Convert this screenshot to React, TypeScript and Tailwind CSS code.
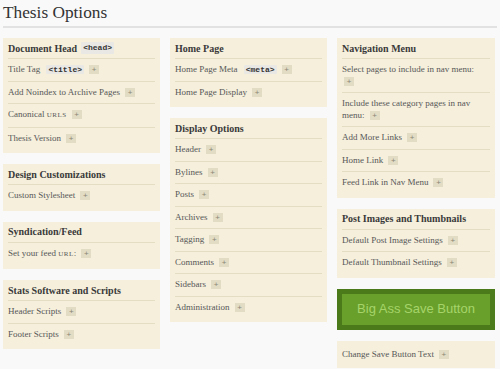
import type { ReactNode } from "react";

type Row = { label: ReactNode; wrap?: boolean };

function Code({ children }: { children: ReactNode }) {
  return (
    <span className="ml-[4px] rounded-[1px] bg-[#e9e8e4] px-[2px] font-[family-name:Liberation_Mono,monospace] text-[8px] font-bold text-[#333]">
      {children}
    </span>
  );
}

function Abbr({ children }: { children: ReactNode }) {
  return <span className="text-[7px] tracking-[0.5px]">{children}</span>;
}

function Plus({ tight }: { tight?: boolean }) {
  return (
    <span
      className={`${tight ? "ml-[2px]" : "ml-[5px]"} inline-block h-[9px] w-[10px] bg-[#e2dcc5] text-center align-middle font-[family-name:Liberation_Sans,sans-serif] text-[8px] leading-[9px] text-[#8a8572]`}
    >
      +
    </span>
  );
}

function Box({ title, rows, bare }: { title?: ReactNode; rows: Row[]; bare?: boolean }) {
  return (
    <div className={`bg-[#f5efdc] px-[5px] ${bare ? "py-[3px]" : "pb-[4px]"}`}>
      {title && (
        <div className="flex h-[21px] items-center border-b border-[#e4dcc3] text-[10px] font-bold text-[#3a3a3a]">
          {title}
        </div>
      )}
      {rows.map((r, i) => (
        <div
          key={i}
          className="border-b border-[#e4dcc3] py-[5px] text-[9px] leading-[11.5px] text-[#575757] last:border-b-0"
        >
          {r.label}
          {r.wrap && <br />}
          <Plus tight={r.wrap} />
        </div>
      ))}
    </div>
  );
}

export default function App() {
  return (
    <div className="min-h-[369px] w-[500px] bg-[#f9f9f9] font-[family-name:Liberation_Serif,serif]">
      <div className="px-[3px] pt-[1px]">
        <h1 className="h-[25px] text-[17.3px] leading-[24px] text-[#333]">Thesis Options</h1>
        <div className="h-[2px] bg-[#e2e2e2]" />
      </div>

      <div className="mt-[10px] grid grid-cols-[157px_157px_158px] gap-x-[10px] pl-[3px]">
        <div className="flex flex-col gap-[11px]">
          <Box
            title={
              <>
                Document Head <Code>&lt;head&gt;</Code>
              </>
            }
            rows={[
              {
                label: (
                  <>
                    Title Tag <Code>&lt;title&gt;</Code>
                  </>
                ),
              },
              { label: "Add Noindex to Archive Pages" },
              {
                label: (
                  <>
                    Canonical <Abbr>URLS</Abbr>
                  </>
                ),
              },
              { label: "Thesis Version" },
            ]}
          />
          <Box title="Design Customizations" rows={[{ label: "Custom Stylesheet" }]} />
          <Box
            title="Syndication/Feed"
            rows={[
              {
                label: (
                  <>
                    Set your feed <Abbr>URL</Abbr>:
                  </>
                ),
              },
            ]}
          />
          <Box
            title="Stats Software and Scripts"
            rows={[{ label: "Header Scripts" }, { label: "Footer Scripts" }]}
          />
        </div>

        <div className="flex flex-col gap-[11px]">
          <Box
            title="Home Page"
            rows={[
              {
                label: (
                  <>
                    Home Page Meta <Code>&lt;meta&gt;</Code>
                  </>
                ),
              },
              { label: "Home Page Display" },
            ]}
          />
          <Box
            title="Display Options"
            rows={[
              "Header",
              "Bylines",
              "Posts",
              "Archives",
              "Tagging",
              "Comments",
              "Sidebars",
              "Administration",
            ].map((label) => ({ label }))}
          />
        </div>

        <div className="flex flex-col gap-[11px]">
          <Box
            title="Navigation Menu"
            rows={[
              { label: "Select pages to include in nav menu:", wrap: true },
              { label: "Include these category pages in nav menu:" },
              { label: "Add More Links" },
              { label: "Home Link" },
              { label: "Feed Link in Nav Menu" },
            ]}
          />
          <Box
            title="Post Images and Thumbnails"
            rows={[
              { label: "Default Post Image Settings" },
              { label: "Default Thumbnail Settings" },
            ]}
          />
          <div className="bg-[#4b7a1b] p-[5px]">
            <button className="flex h-[31px] w-full items-center justify-center bg-[#69a02b] font-[family-name:Liberation_Sans,Arial,sans-serif] text-[13px] text-[#a6d46a]">
              Big Ass Save Button
            </button>
          </div>
          <Box bare rows={[{ label: "Change Save Button Text" }]} />
        </div>
      </div>
    </div>
  );
}
